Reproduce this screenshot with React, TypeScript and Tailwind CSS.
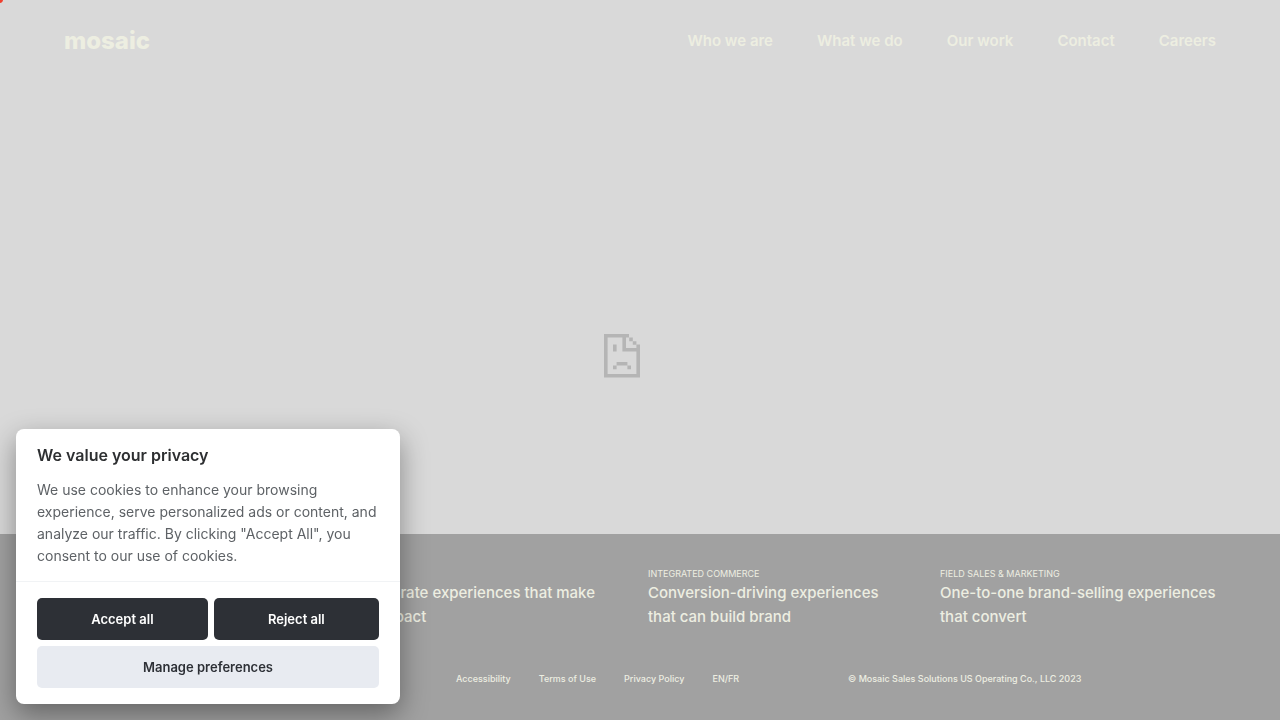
const navLinks = ["Who we are", "What we do", "Our work", "Contact", "Careers"];

const services = [
  {
    label: "",
    lines: ["Corporate experiences that make", "an impact"],
    className: "col-start-2",
  },
  {
    label: "Integrated Commerce",
    lines: ["Conversion-driving experiences", "that can build brand"],
    className: "",
  },
  {
    label: "Field Sales & Marketing",
    lines: ["One-to-one brand-selling experiences", "that convert"],
    className: "",
  },
];

const legalLinks = ["Accessibility", "Terms of Use", "Privacy Policy", "EN/FR"];

function SadPage() {
  return (
    <svg
      className="w-9 h-11"
      viewBox="0 0 36 44"
      fill="#b5b5b5"
      aria-hidden="true"
    >
      <path d="M0 0h25v3.6h-3V14h10.4v-3.4H36v33H0zM3.6 3.6V40h28.8V17.6h-14V3.6z" />
      <path d="M25.2 3.6h3.6v3.6h-3.6zM28.8 7.2h3.6v3.6h-3.6z" />
      <path d="M9 10.4h3.6v7.2H9zM12.6 28h10.8v3.6H12.6zM9 31.6h3.6v3.6H9zM23.4 31.6H27v3.6h-3.6z" />
    </svg>
  );
}

function CookieBanner() {
  return (
    <section
      aria-labelledby="cookie-title"
      className="fixed left-4 bottom-4 z-20 w-96 rounded-lg bg-white shadow-[0_10px_28px_rgba(2,2,3,0.38)]"
    >
      <div className="px-[21px] pt-3.5 pb-3.5">
        <h2
          id="cookie-title"
          className="text-base leading-6 font-semibold text-[#2d2f31]"
        >
          We value your privacy
        </h2>
        <p className="mt-3 text-sm leading-[22px] text-[#5e6266]">
          We use cookies to enhance your browsing experience, serve personalized
          ads or content, and analyze our traffic. By clicking "Accept All", you
          consent to our use of cookies.
        </p>
      </div>
      <div className="flex flex-col gap-1.5 border-t border-[#f1f3f5] px-[21px] py-4 text-[13px] font-semibold">
        <div className="flex gap-1.5">
          <button
            type="button"
            className="h-[42px] flex-auto rounded-[5px] bg-[#2d3036] pt-0.5 text-white"
          >
            Accept all
          </button>
          <button
            type="button"
            className="h-[42px] flex-auto rounded-[5px] bg-[#2d3036] pt-0.5 text-white"
          >
            Reject all
          </button>
        </div>
        <button
          type="button"
          className="h-[42px] rounded-[5px] bg-[#e8ebf1] pt-0.5 text-[#2d3036]"
        >
          Manage preferences
        </button>
      </div>
    </section>
  );
}

export default function App() {
  return (
    <div className="relative min-h-screen flex flex-col overflow-hidden bg-[#d9d9d9] font-['Inter',sans-serif] text-[#edeee1]">
      {/* custom cursor dot */}
      <span className="absolute -left-1 -top-1 z-30 size-[7px] rounded-full bg-[#f0402f]" />

      <div className="absolute inset-0 flex items-center justify-center pr-9 pb-2">
        <SadPage />
      </div>

      <header className="relative flex items-center justify-between px-16 pt-[25px]">
        <a href="#" className="text-2xl leading-8 font-extrabold">
          mosaic
        </a>
        <nav className="flex gap-11 text-[15px] leading-8 font-semibold">
          {navLinks.map((link) => (
            <a key={link} href="#">
              {link}
            </a>
          ))}
        </nav>
      </header>

      <footer className="relative mt-auto bg-[#a1a1a1] px-16 pt-[33px] pb-[31px]">
        <div className="grid grid-cols-4 gap-4">
          {services.map((service) => (
            <div key={service.lines[0]} className={service.className}>
              <h3 className="h-3.5 text-[9px] leading-[14px] uppercase">
                {service.label}
              </h3>
              <p className="text-[15px] leading-6 font-medium whitespace-nowrap">
                {service.lines[0]}
                <br />
                {service.lines[1]}
              </p>
            </div>
          ))}
        </div>
        <div className="mt-10 grid grid-cols-3 gap-6 text-[9px] leading-5 font-medium">
          <nav className="col-start-2 flex gap-7 whitespace-nowrap">
            {legalLinks.map((link) => (
              <a key={link} href="#">
                {link}
              </a>
            ))}
          </nav>
          <p>© Mosaic Sales Solutions US Operating Co., LLC 2023</p>
        </div>
      </footer>

      <CookieBanner />
    </div>
  );
}
